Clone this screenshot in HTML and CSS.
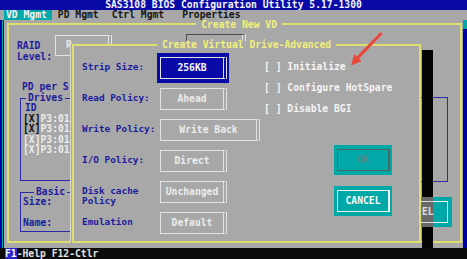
FILE: index.html
```html
<!DOCTYPE html>
<html lang="en">
  <head>
    <meta charset="UTF-8" />
    <title>SAS3108 BIOS Configuration Utility</title>
    <link rel="stylesheet" href="styles.css">
  </head>
  <body>
    <div class="screen">
      <div class="titlebar">SAS3108 BIOS Configuration Utility 5.17-1300</div>

      <div class="menubar">
        <span class="menu active">VD Mgmt</span>
        <span class="menu pd">PD Mgmt</span>
        <span class="menu ctrl">Ctrl Mgmt</span>
        <span class="menu props">Properties</span>
      </div>

      <div class="main">
        <div class="edge-left"></div>

        <div class="frame">
          <div class="frame-title">Create New VD</div>

          <div class="bg-panel">
            <div class="bg-left">
              <div class="raid-row">
                <div class="raid-label">RAID<br />Level:</div>
                <div class="raid-box">R</div>
                <div class="raid-box2"></div>
              </div>

              <div class="pd-text">PD per S</div>

              <div class="group drives">
                <div class="group-title">Drives</div>
                <div class="id">ID</div>
                <div class="drive"><b>[X]</b>P3:01</div>
                <div class="drive"><b>[X]</b>P3:01</div>
                <div class="drive off">[X]P3:01</div>
                <div class="drive off">[X]P3:01</div>
              </div>

              <div class="group basic">
                <div class="group-title">Basic</div>
                <div>Size:</div>
                <div>&nbsp;</div>
                <div>Name:</div>
              </div>
            </div>

            <div class="bg-right">
              <div class="bg-box"></div>
              <div class="bg-cancel"><span></span></div>
            </div>
          </div>

          <!-- dialog window on top of the Create New VD screen -->
          <div class="dlg">
            <div class="dlg-title">Create Virtual Drive-Advanced</div>
            <div class="dlg-body">
              <div class="fields">
                <div class="label">Strip Size:</div>
                <div class="ctl sel"><div class="btn">256KB</div></div>

                <div class="label">Read Policy:</div>
                <div class="ctl"><div class="btn">Ahead</div></div>

                <div class="label">Write Policy:</div>
                <div class="ctl"><div class="btn wide">Write Back</div></div>

                <div class="label">I/O Policy:</div>
                <div class="ctl"><div class="btn">Direct</div></div>

                <div class="label">Disk cache<br />Policy</div>
                <div class="ctl"><div class="btn">Unchanged</div></div>

                <div class="label">Emulation</div>
                <div class="ctl"><div class="btn">Default</div></div>
              </div>

              <div class="side">
                <div class="check">[ ] Initialize</div>
                <div class="check">[ ] Configure HotSpare</div>
                <div class="check">[ ] Disable BGI</div>

                <div class="actions">
                  <div class="act ok"><span>OK</span></div>
                  <div class="act cancel"><span>CANCEL</span></div>
                </div>
              </div>
            </div>
          </div>

          <div class="shadow">
            <div class="shadow-cell"><span>EL</span></div>
          </div>
        </div>

        <div class="edge-right"></div>
      </div>

      <div class="status"><span class="key">F1</span>-Help F12-Ctlr</div>
    </div>

    <svg class="arrow" width="467" height="259" viewBox="0 0 467 259">
      <polygon
        points="380.5,32 382.5,34 359,58.8 361.6,61.2 351,65.5 354.2,54.3 356.8,56.6"
        fill="#e8473a"
      />
    </svg>
  </body>
</html>
```

FILE: styles.css
```css
body {
  margin: 0;
  background: #a8a8a8;
  font-family: "DejaVu Sans Mono", "Liberation Mono", monospace;
  font-weight: bold;
  font-size: 9.7px;
  line-height: 10px;
  position: relative;
  overflow: hidden;
}
.screen {
  width: 467px;
  height: 259px;
  display: flex;
  flex-direction: column;
}
.titlebar {
  height: 10px;
  background: #0a0aa8;
  color: #f4f4f4;
  text-align: center;
}
.menubar {
  height: 10px;
  display: flex;
  padding-left: 4px;
  color: #161616;
}
.menu.active {
  background: #00a8a8;
  color: #f4f4f4;
  padding: 0 5px 0 2px;
}
.menu.pd {
  margin-left: 6px;
}
.menu.ctrl {
  margin-left: 13px;
}
.menu.props {
  margin-left: 18px;
}
.main {
  height: 228px;
  display: flex;
}
.edge-left {
  width: 4px;
  background: linear-gradient(to right, #0000a8 0 2px, #00a8a8 2px 3px, #0000a8 3px);
}
.edge-right {
  width: 4px;
  background: linear-gradient(to bottom, #00a8a8 0 9px, #0000a8 9px);
}
.frame {
  flex: 1;
  margin: 3px 1px 5px 3px;
  border: 2px solid #dede6c;
  position: relative;
}
.frame-title,
.dlg-title {
  width: fit-content;
  background: #a8a8a8;
  color: #f0f07a;
  padding: 0 5px;
  line-height: 8px;
}
.frame-title {
  margin: -4px 178px 0 auto;
}

/* screen behind the dialog */
.bg-panel {
  display: flex;
  color: #1c1c9c;
}
.bg-left {
  display: flex;
  flex-direction: column;
}
.raid-row {
  display: flex;
  align-items: flex-start;
  margin: 6px 0 0 8px;
}
.raid-label {
  width: 38px;
  margin-top: 5px;
  line-height: 11px;
}
.raid-box {
  width: 57px;
  height: 21px;
  box-sizing: border-box;
  border: 1px solid #e4e4e4;
  border-right: 4px double #e4e4e4;
  color: #e8e8e8;
  padding: 4px 0 0 10px;
}
.raid-box2 {
  width: 55px;
  height: 14px;
  margin: -1px 0 0 74px;
  border-top: 1px solid #4c4c4c;
  border-left: 1px solid #4c4c4c;
  border-right: 4px double #e4e4e4;
}
.pd-text {
  margin: 20px 0 0 13px;
  white-space: nowrap;
}
.group {
  width: 50px;
  margin-left: 11px;
  border: 1px solid #2828a8;
  border-right: none;
  padding-left: 2px;
  line-height: 10.5px;
  white-space: nowrap;
}
.group-title {
  width: fit-content;
  background: #a8a8a8;
  margin-top: -6px;
  line-height: 10px;
  padding: 0 2px;
}
.drives {
  margin-top: 6px;
  padding-bottom: 24px;
}
.drives .group-title {
  margin-left: 3px;
}
.id {
  margin-left: 2px;
}
.drive {
  color: #ececec;
}
.drive b {
  color: #101010;
}
.basic {
  margin-top: 11px;
  padding-bottom: 3px;
}
.basic .group-title {
  margin-left: 11px;
}
.bg-right {
  margin: 68px 8px 0 auto;
  width: 73px;
}
.bg-box {
  width: 69px;
  height: 85px;
  box-sizing: border-box;
  border: 1px solid #2c2ca8;
}
.bg-cancel {
  margin-top: 15px;
  height: 30px;
  box-sizing: border-box;
  background: #00a8a8;
  padding: 4px 4px 4px 3px;
}
.bg-cancel span {
  display: block;
  height: 22px;
  box-sizing: border-box;
  border: 1px solid #f0f0f0;
}

/* dialog */
.dlg {
  position: absolute;
  left: 63px;
  top: 19px;
  width: 349px;
  height: 199px;
  box-sizing: border-box;
  border: 2px solid #dede6c;
  background: #a8a8a8;
  box-shadow: -1px 0 0 #a8a8a8, -2px 0 0 #d6d6d6;
}
.dlg-title {
  margin: -5px auto 0;
}
.dlg-body {
  display: flex;
  padding: 3px 0 0 8px;
}
.fields {
  display: grid;
  grid-template-columns: 75px 107px;
  grid-auto-rows: 31px;
}
.label {
  color: #1c1c9c;
  padding-top: 10px;
  font-size: 9.4px;
  white-space: nowrap;
}
.ctl {
  justify-self: start;
  align-self: center;
  padding: 4px 2px 4px 3px;
}
.ctl.sel {
  background: #0a0aa8;
}
.btn {
  width: 67px;
  height: 22px;
  box-sizing: border-box;
  border: 1px solid #e2e2e2;
  border-right: 4px double #e2e2e2;
  color: #ececec;
  line-height: 20px;
  text-align: center;
}
.btn.wide {
  width: 100px;
}
.sel .btn {
  color: #f8f8f8;
}
.side {
  padding-top: 4px;
  color: #f4f4f4;
}
.check {
  line-height: 21px;
  white-space: nowrap;
}
.actions {
  margin: 26px 0 0 70px;
  display: flex;
  flex-direction: column;
  gap: 11px;
}
.act {
  width: 58px;
  height: 30px;
  box-sizing: border-box;
  background: #00a8a8;
  padding: 4px 2px 4px 3px;
}
.act span {
  display: block;
  height: 22px;
  box-sizing: border-box;
  border: 1px solid #f0f0f0;
  border-right-width: 2px;
  line-height: 20px;
  text-align: center;
}
.act.ok span {
  border-color: #4e6464;
  color: #4e8a8a;
}
.act.cancel span {
  color: #f8f8f8;
}

/* dialog drop shadow */
.shadow {
  position: absolute;
  left: 413px;
  top: 25px;
  width: 11px;
  height: 198px;
  background: #050505;
}
.shadow-cell {
  margin-top: 147px;
  height: 30px;
  padding-top: 4px;
  box-sizing: border-box;
  background: #6a6a6a;
}
.shadow-cell span {
  display: block;
  height: 22px;
  box-sizing: border-box;
  border-top: 1px solid #d8d8d8;
  border-bottom: 1px solid #d8d8d8;
  line-height: 20px;
  color: #e0e0e0;
}

.status {
  height: 11px;
  line-height: 11px;
  background: #0c0c0c;
  color: #e4e4e4;
  padding-left: 5px;
}
.key {
  background: #2424c8;
  color: #ffffff;
}
.arrow {
  position: absolute;
  left: 0;
  top: 0;
  pointer-events: none;
}
```
